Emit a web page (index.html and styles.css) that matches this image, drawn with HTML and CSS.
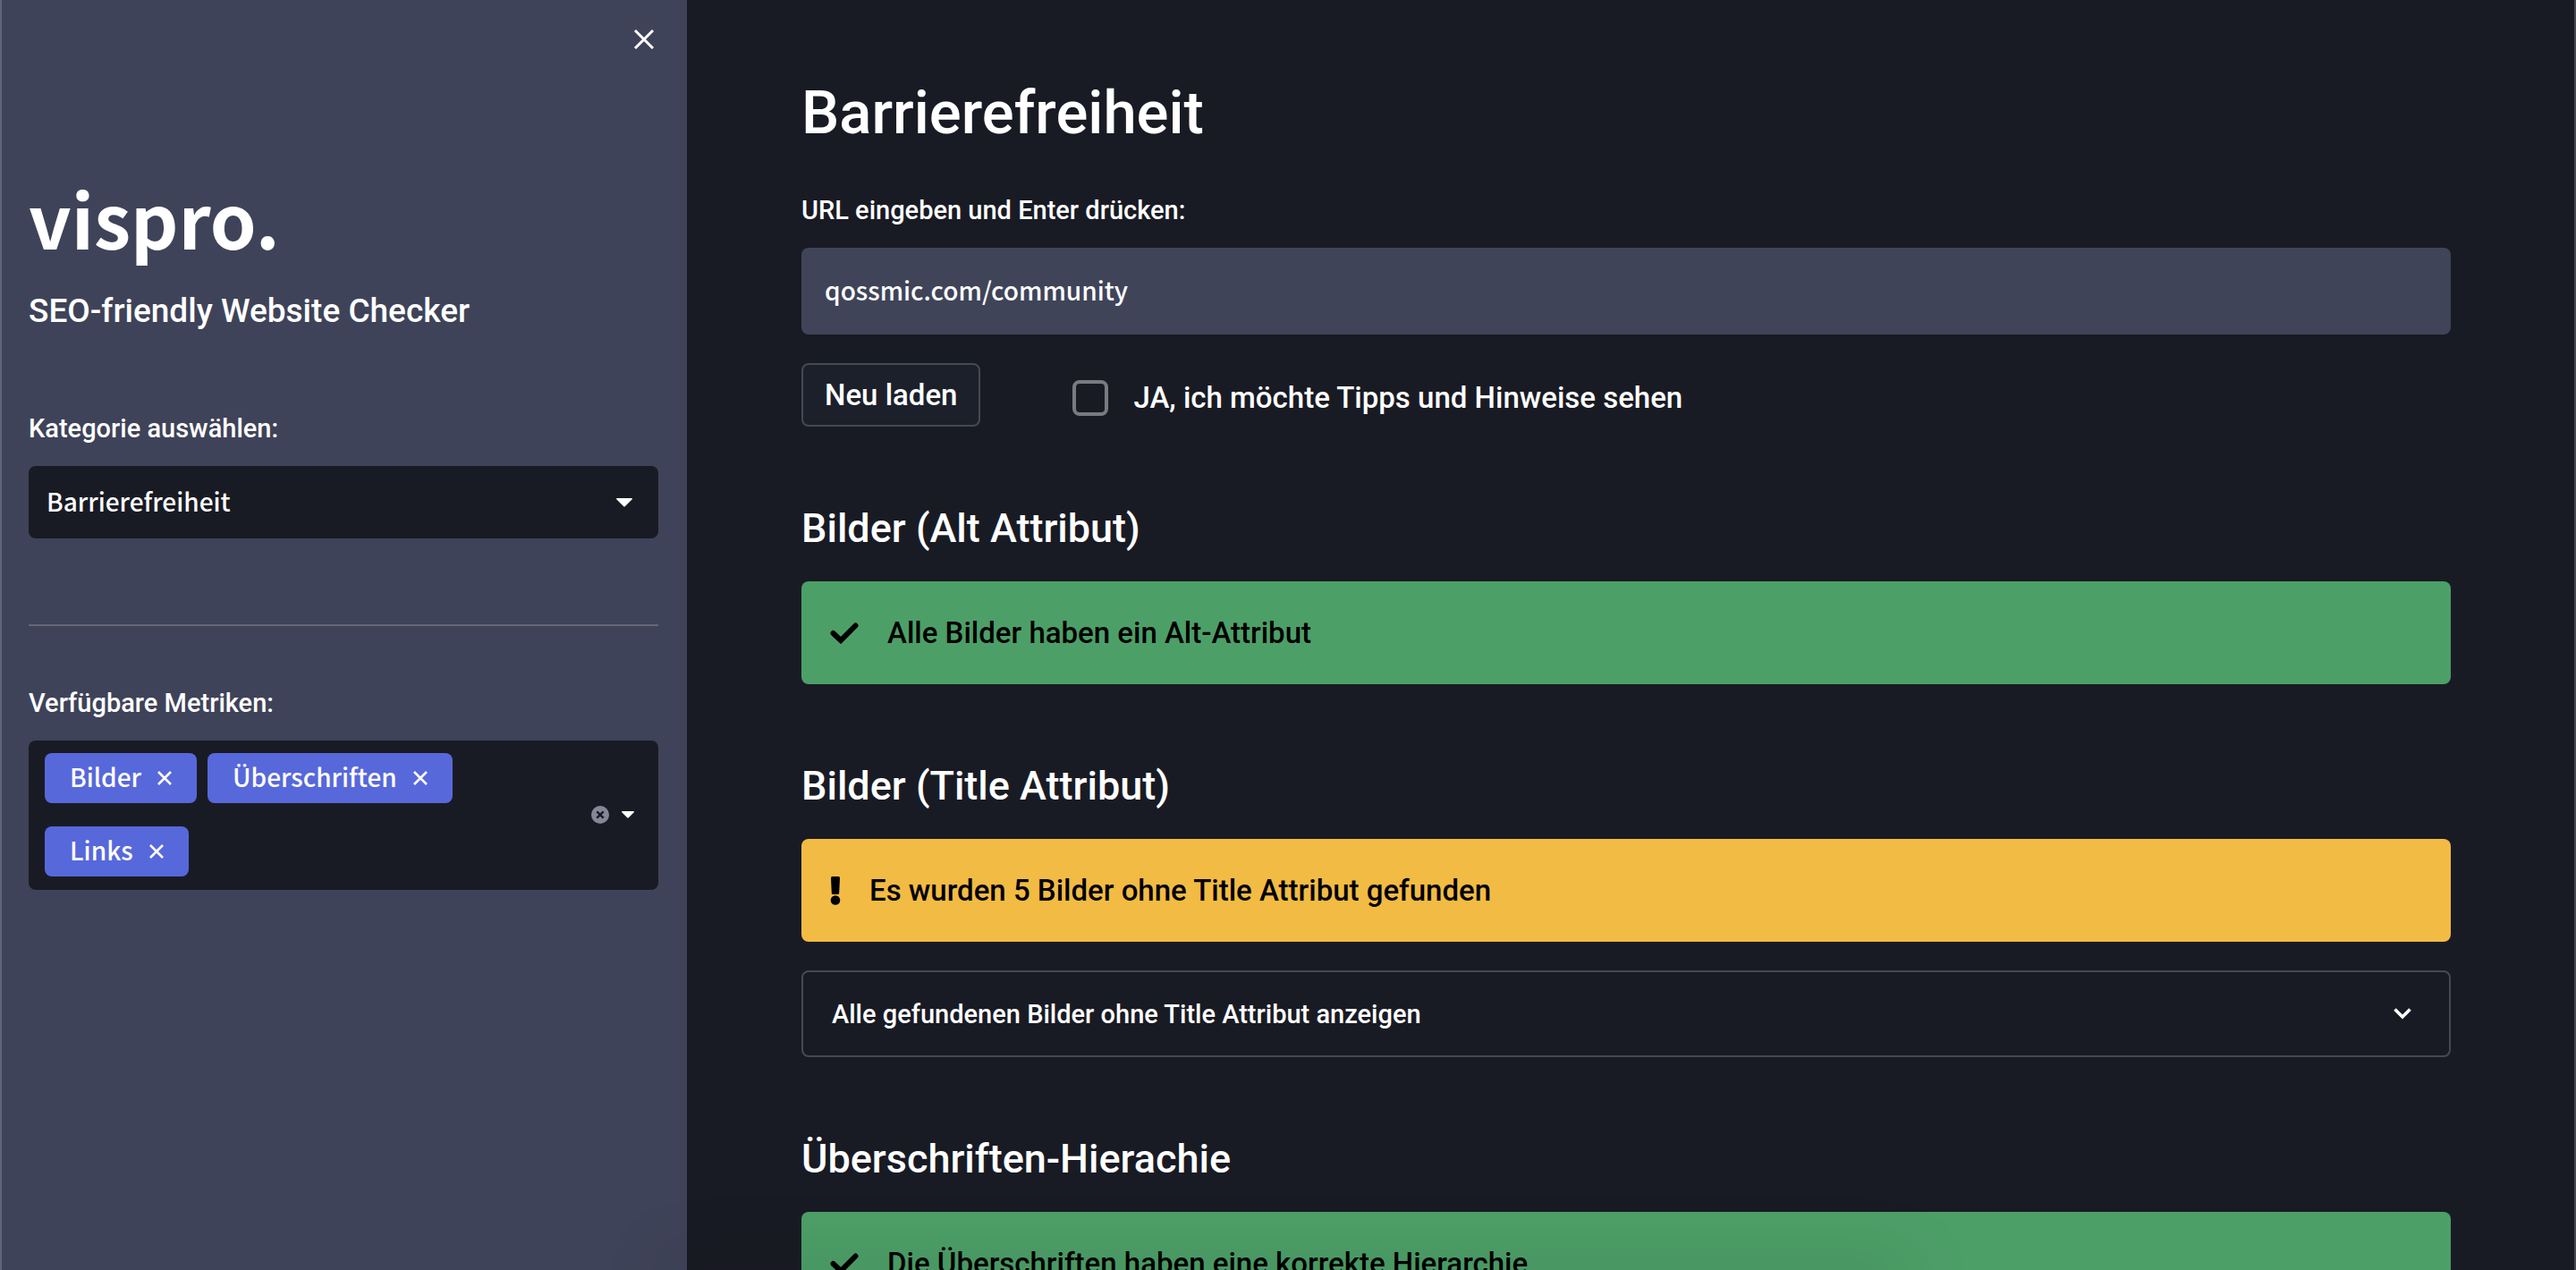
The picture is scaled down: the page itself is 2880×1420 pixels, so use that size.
FILE: index.html
```html
<!DOCTYPE html>
<html lang="de">
<head>
<meta charset="utf-8">
<meta name="viewport" content="width=device-width, initial-scale=1">
<title>vispro. – Barrierefreiheit</title>
<link rel="stylesheet" href="styles.css">
</head>
<body>
<div class="app">
  <aside class="sidebar">
    <div class="sidebar-top">
      <button class="icon-button" type="button" aria-label="Seitenleiste schließen">
        <svg width="24" height="24" viewBox="0 0 24 24"><path d="M2 2 22 22M22 2 2 22" fill="none" stroke="currentColor" stroke-width="3"/></svg>
      </button>
    </div>
    <div class="logo">vispro.</div>
    <p class="tagline">SEO-friendly Website Checker</p>

    <label class="label" for="category">Kategorie auswählen:</label>
    <div class="select">
      <select id="category"><option>Barrierefreiheit</option></select>
      <svg class="select-arrow" width="18" height="10" viewBox="0 0 18 10"><path d="M0 1Q0 0 1 0H17Q18 0 18 1L10 9Q9 10 8 9Z" fill="currentColor"/></svg>
    </div>

    <hr class="divider">

    <span class="label" id="metrics-label">Verfügbare Metriken:</span>
    <div class="multiselect" role="group" aria-labelledby="metrics-label">
      <div class="tags">
        <span class="tag"><span class="tag-text">Bilder</span><button type="button" class="tag-remove" aria-label="Bilder entfernen"><svg width="16" height="16" viewBox="0 0 16 16"><path d="M1 1 15 15M15 1 1 15" fill="none" stroke="currentColor" stroke-width="2.6"/></svg></button></span>
        <span class="tag"><span class="tag-text">Überschriften</span><button type="button" class="tag-remove" aria-label="Überschriften entfernen"><svg width="16" height="16" viewBox="0 0 16 16"><path d="M1 1 15 15M15 1 1 15" fill="none" stroke="currentColor" stroke-width="2.6"/></svg></button></span>
        <span class="tag"><span class="tag-text">Links</span><button type="button" class="tag-remove" aria-label="Links entfernen"><svg width="16" height="16" viewBox="0 0 16 16"><path d="M1 1 15 15M15 1 1 15" fill="none" stroke="currentColor" stroke-width="2.6"/></svg></button></span>
      </div>
      <div class="multiselect-tools">
        <button type="button" class="tag-remove" aria-label="Alle entfernen"><svg width="20" height="20" viewBox="0 0 20 20"><circle cx="10" cy="10" r="10" fill="#858799"/><path d="M6.300 6.300 13.700 13.700M13.700 6.300 6.300 13.700" stroke="#191b24" stroke-width="2.400"/></svg></button>
        <button type="button" class="tag-remove" aria-label="Auswahl öffnen"><svg width="14" height="8" viewBox="0 0 14 8"><path d="M0 1Q0 0 1 0H13Q14 0 14 1L8 7Q7 8 6 7Z" fill="currentColor"/></svg></button>
      </div>
    </div>
  </aside>

  <main class="main">
    <h1 class="title">Barrierefreiheit</h1>
    <label class="label" for="url">URL eingeben und Enter drücken:</label>
    <input class="text-input" id="url" type="text" value="qossmic.com/community">

    <div class="actions">
      <button class="button" type="button">Neu laden</button>
      <label class="check"><input type="checkbox">JA, ich möchte Tipps und Hinweise sehen</label>
    </div>

    <section class="section">
      <h3 class="heading">Bilder (Alt Attribut)</h3>
      <div class="alert alert-ok">
        <svg width="32" height="24" viewBox="0 0 32 24"><path d="M3.500 12 12 20 28.500 3.500" fill="none" stroke="currentColor" stroke-width="6" stroke-linecap="round"/></svg>
        <span>Alle Bilder haben ein Alt-Attribut</span>
      </div>
    </section>

    <section class="section">
      <h3 class="heading">Bilder (Title Attribut)</h3>
      <div class="alert alert-warn">
        <svg width="12" height="32" viewBox="0 0 12 32"><path d="M2.500 0H9.500Q11 0 11 1.500L10.200 18.500Q10.100 20 8.600 20H3.400Q1.900 20 1.800 18.500L1 1.500Q1 0 2.500 0Z" fill="currentColor"/><circle cx="6" cy="26.500" r="5.300" fill="currentColor"/></svg>
        <span>Es wurden 5 Bilder ohne Title Attribut gefunden</span>
      </div>
      <details class="expander">
        <summary>Alle gefundenen Bilder ohne Title Attribut anzeigen
          <svg width="20" height="13" viewBox="0 0 20 13"><path d="M1.500 1.500 10 10 18.500 1.500" fill="none" stroke="currentColor" stroke-width="3.600"/></svg>
        </summary>
      </details>
    </section>

    <section class="section">
      <h3 class="heading">Überschriften-Hierachie</h3>
      <div class="alert alert-ok">
        <svg width="32" height="24" viewBox="0 0 32 24"><path d="M3.500 12 12 20 28.500 3.500" fill="none" stroke="currentColor" stroke-width="6" stroke-linecap="round"/></svg>
        <span>Die Überschriften haben eine korrekte Hierarchie</span>
      </div>
    </section>
  </main>
</div>
<div class="bottom-shade"></div>
</body>
</html>
```
FILE: styles.css
```css
* { box-sizing: border-box; }

body {
  margin: 0;
  overflow: hidden;
  background: #191b24;
  color: #fff;
  font-family: Roboto, "Liberation Sans", sans-serif;
  font-weight: 500;
}

svg { display: block; flex: none; }
button { color: inherit; cursor: pointer; }

.app {
  display: grid;
  grid-template-columns: 768px minmax(0, 1fr);
  height: 100vh;
}

/* Sidebar */
.sidebar {
  padding: 0 32px 0 30px;
  border-left: 2px solid #606479;
  background: #3f4359;
}

.sidebar-top {
  display: flex;
  justify-content: flex-end;
  margin-right: -4px;
  padding-top: 24px;
}

.icon-button {
  display: grid;
  place-items: center;
  width: 40px;
  height: 40px;
  padding: 0;
  border: 0;
  background: none;
}

.logo {
  margin-top: 120px;
  font: 700 83px/118px "Noto Sans CJK JP", sans-serif;
}

.tagline {
  margin: 22px 0 87px;
  font-size: 37px;
  line-height: 48px;
}

.label {
  display: block;
  margin-bottom: 22px;
  font-size: 29px;
  line-height: 40px;
}

.select {
  display: grid;
  align-items: center;
}

.select > * { grid-area: 1 / 1; }

.select select {
  width: 100%;
  height: 81px;
  padding: 0 64px 4px 20px;
  border: 0;
  border-radius: 8px;
  appearance: none;
  background: #191b24;
  color: inherit;
  font: 500 28px "Noto Sans CJK JP", sans-serif;
}

.select-arrow {
  justify-self: end;
  margin-right: 29px;
  pointer-events: none;
}

.divider {
  height: 2px;
  margin: 96px 0 66px;
  border: 0;
  background: #636777;
}

.multiselect {
  display: flex;
  justify-content: space-between;
  align-items: center;
  padding: 14px 27px 15px 18px;
  border-radius: 8px;
  background: #191b24;
}

.tags {
  display: flex;
  flex: 0 1 540px;
  flex-wrap: wrap;
  gap: 26px 12px;
}

.tag {
  display: flex;
  align-items: center;
  gap: 18px;
  height: 56px;
  padding: 0 28px;
  border-radius: 8px;
  background: #5768db;
  font: 500 28px/40px "Noto Sans CJK JP", sans-serif;
}

.tag-text { padding-bottom: 4px; }

.tag-remove {
  padding: 0;
  border: 0;
  background: none;
}

.multiselect-tools {
  display: flex;
  align-items: center;
  gap: 14px;
}

/* Main column */
.main {
  padding: 86px 138px 0 128px;
  border-right: 2px solid #474951;
  overflow-y: auto;
  scrollbar-width: none;
}

.title {
  margin: 0 0 49px;
  font-weight: 500;
  font-size: 67px;
  line-height: 80px;
}

.text-input {
  display: block;
  width: 100%;
  height: 97px;
  padding: 0 26px 4px;
  border: 0;
  border-radius: 8px;
  background: #3f4459;
  color: inherit;
  font: 500 28px "Noto Sans CJK JP", sans-serif;
}

.actions {
  display: flex;
  gap: 103px;
  margin-top: 32px;
}

.button {
  height: 71px;
  padding: 0 24px;
  border: 2px solid #474951;
  border-radius: 8px;
  background: #1c202b;
  font: 500 33px Roboto, sans-serif;
}

.check {
  display: flex;
  align-items: center;
  gap: 28px;
  padding-top: 6px;
  font-size: 33px;
}

.check input {
  width: 40px;
  height: 40px;
  margin: 0;
  border: 4px solid #797b83;
  border-radius: 8px;
  appearance: none;
}

.section { margin-top: 86px; }

.heading {
  margin: 0 0 31px;
  font-weight: 500;
  font-size: 45px;
  line-height: 56px;
}

.alert {
  display: flex;
  align-items: center;
  gap: 32px;
  height: 115px;
  padding: 0 32px;
  border-radius: 8px;
  color: #000;
  font-size: 33px;
}

.alert-ok { background: #4d9f68; }
.alert-warn { background: #f2bb44; }

.expander {
  margin-top: 32px;
  border: 2px solid #474951;
  border-radius: 8px;
}

.expander summary {
  display: flex;
  justify-content: space-between;
  align-items: center;
  height: 93px;
  padding: 0 42px 0 32px;
  font-size: 29px;
  list-style: none;
}

/* Soft shade along the lower window edge */
.bottom-shade {
  position: fixed;
  right: 26%;
  bottom: 0;
  left: 26%;
  box-shadow: 0 0 72px 16px rgba(0, 0, 0, 0.12);
  pointer-events: none;
}
```
